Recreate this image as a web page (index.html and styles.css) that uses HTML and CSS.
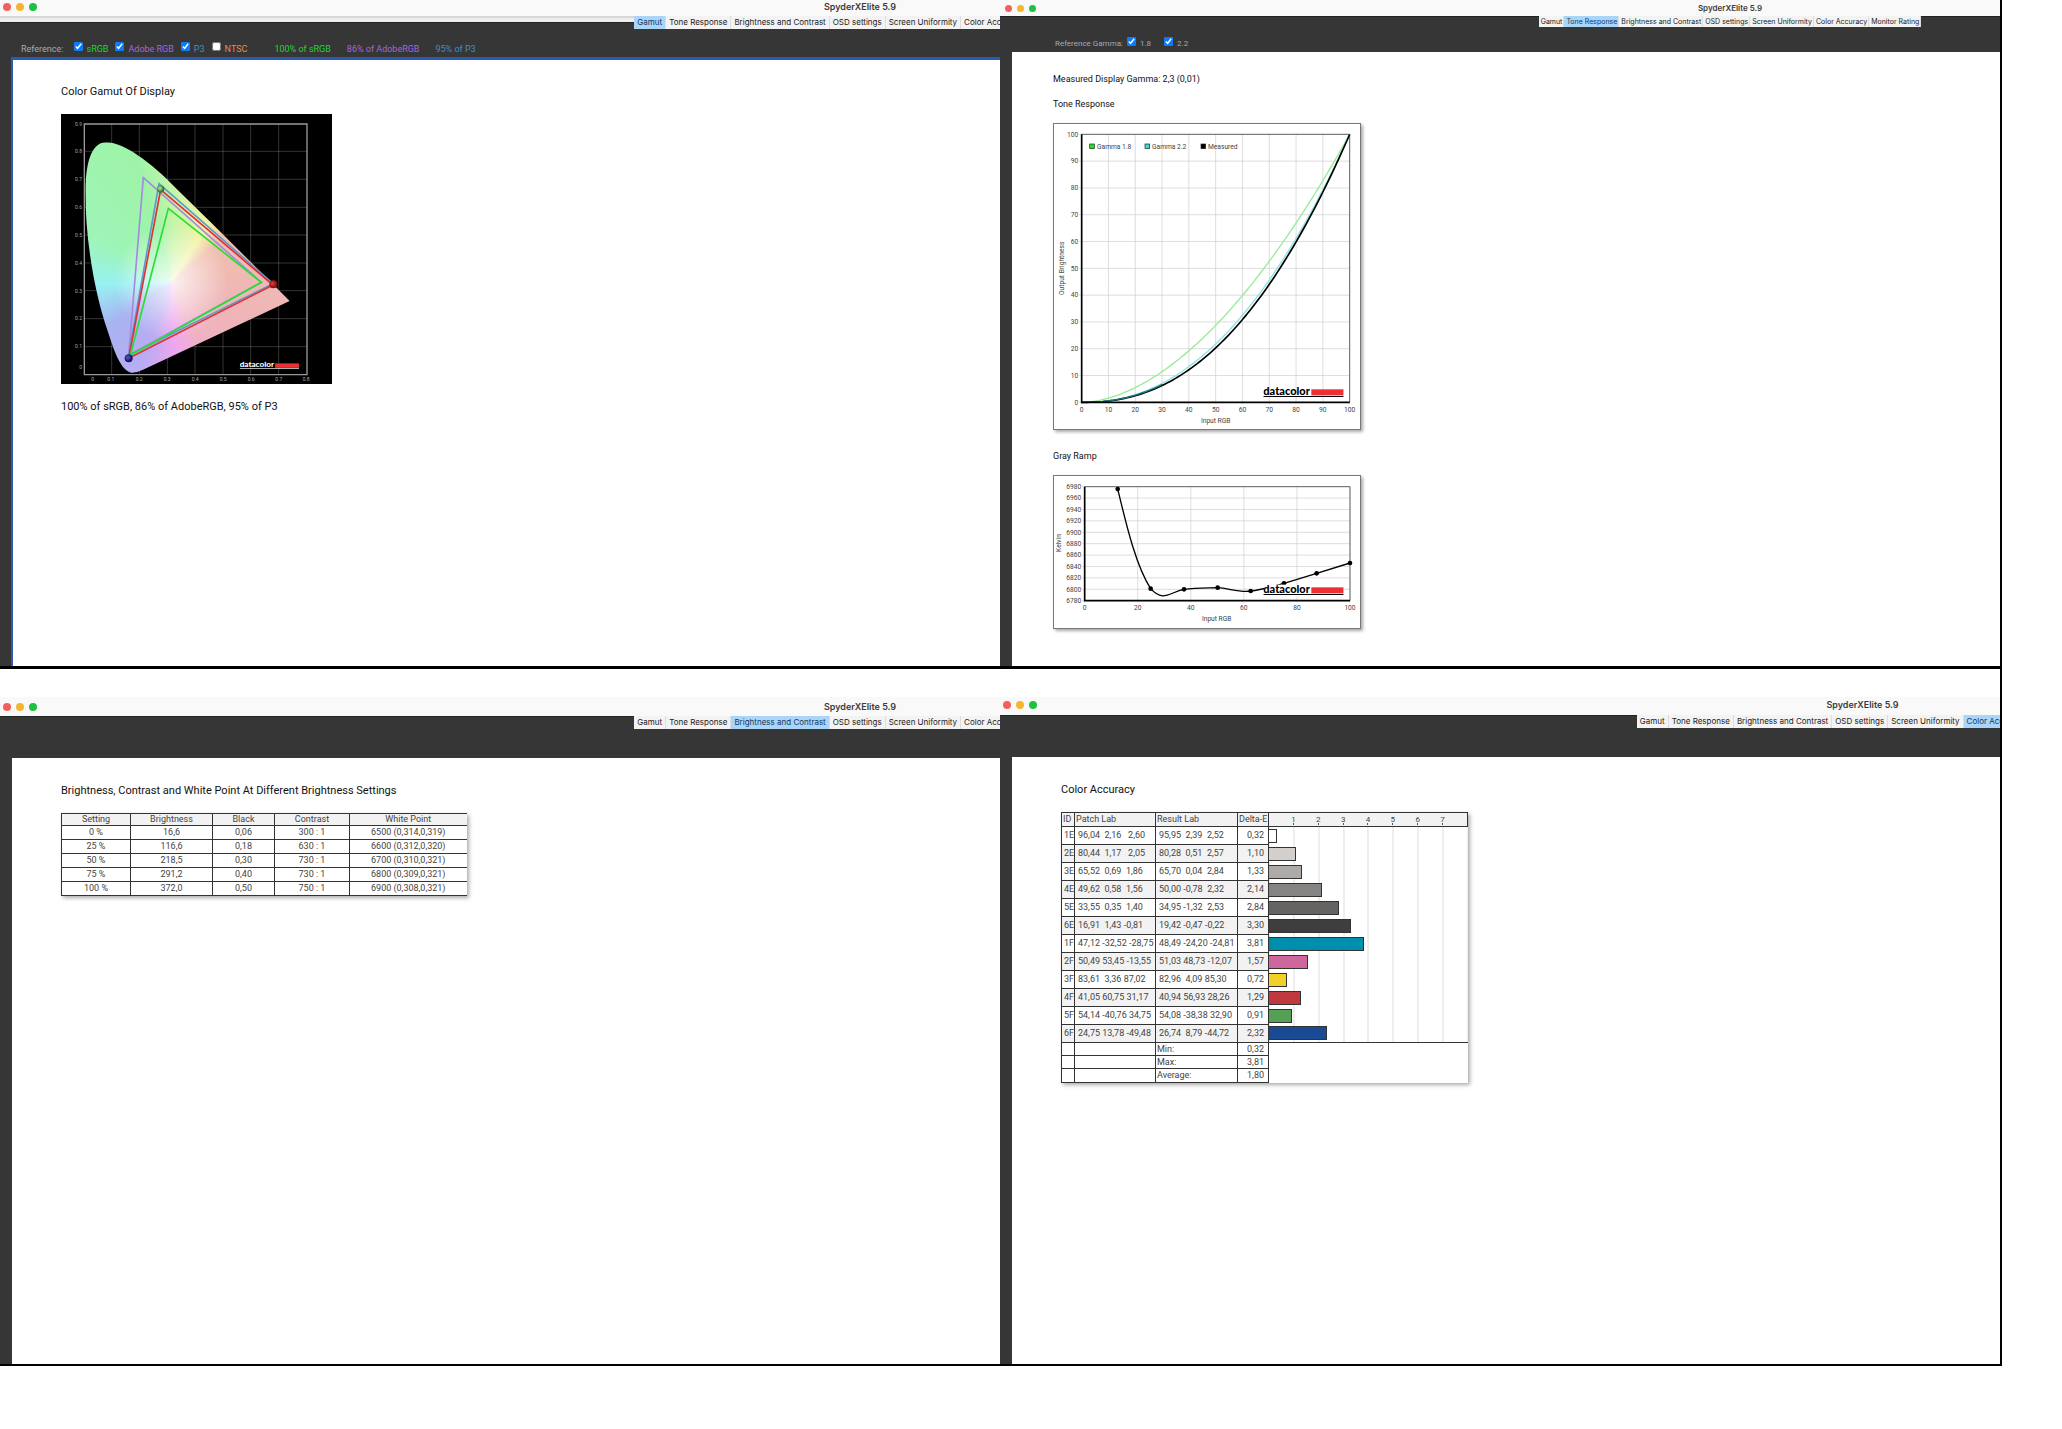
FILE: index.html
```html
<!DOCTYPE html>
<html lang="en">
<head>
<meta charset="utf-8">
<title>SpyderXElite 5.9</title>
<link rel="stylesheet" href="styles.css">
</head>
<body>
<svg class="defs" aria-hidden="true">
  <symbol id="datacolor" viewBox="0 0 241 31">
    <text class="logo-text" x="0" y="23">datacolor</text>
    <rect x="144" y="7" width="97" height="18" fill="#ee3034"/>
    <rect x="0" y="27" width="241" height="3" fill="currentColor"/>
  </symbol>
</svg>
<main class="board">
  <div class="row row-first">
    <section class="window window-gamut">
      <div class="chrome">
        <header class="titlebar"><span class="lights"><i class="red"></i><i class="amber"></i><i class="green"></i></span><span class="title">SpyderXElite 5.9</span></header>
        <nav class="tabs tabs-strip">
          <div class="tablist"><button class="active">Gamut</button><button>Tone Response</button><button>Brightness and Contrast</button><button>OSD settings</button><button>Screen Uniformity</button><button>Color Accuracy</button><button>Monitor Rating</button></div>
        </nav>
      </div>
      <div class="toolbar">
        <span class="lead">Reference:</span>
        <label class="c-srgb"><input type="checkbox" checked>sRGB</label>
        <label class="c-adobe"><input type="checkbox" checked>Adobe RGB</label>
        <label class="c-p3"><input type="checkbox" checked>P3</label>
        <label class="c-ntsc"><input type="checkbox">NTSC</label>
        <span class="results"><span class="c-srgb">100% of sRGB</span><span class="c-adobe">86% of AdobeRGB</span><span class="c-p3">95% of P3</span></span>
      </div>
      <div class="content">
        <h2>Color Gamut Of Display</h2>
        <svg class="gamut" viewBox="64 101 813 810">
          <defs>
            <clipPath id="locus"><path d="M275 877C240 868 222 805 205 755C165 640 137 480 137 330C139 260 150 186 200 186C255 186 340 255 385 300C430 345 500 412 545 457L750 662L310 868Q290 878 275 877Z"/></clipPath>
            <radialGradient id="ballG" cx="0.4" cy="0.4"><stop offset="0" stop-color="#c5e8b0"/><stop offset="1" stop-color="#2d7a28"/></radialGradient>
            <radialGradient id="ballR" cx="0.4" cy="0.4"><stop offset="0" stop-color="#e04040"/><stop offset="1" stop-color="#8a0d10"/></radialGradient>
            <radialGradient id="ballB" cx="0.4" cy="0.4"><stop offset="0" stop-color="#5a55d8"/><stop offset="1" stop-color="#15125e"/></radialGradient>
          </defs>
          <rect x="64" y="101" width="813" height="810"/>
          <path class="gamut-grid" d="M216 131V883M299 131V883M383 131V883M466 131V883M550 131V883M633 131V883M717 131V883M134 213H802M134 297H802M134 381H802M134 464H802M134 548H802M134 631H802M134 715H802M134 799H802"/>
          <foreignObject x="64" y="101" width="813" height="810" clip-path="url(#locus)"><div class="spectrum"></div></foreignObject>
          <path class="gamut-frame" d="M134 131H802V883H134Z"/>
          <g fill="none" stroke-width="5">
            <path stroke="#a58be0" d="M311 292L665 606L267 825Z"/>
            <path stroke="#5d9bc9" d="M358 310L700 610L267 825Z"/>
            <path stroke="#e03038" d="M363 328L700 614L267 834Z"/>
            <path stroke="#25df35" d="M386 384L665 606L272 825Z"/>
          </g>
          <circle cx="363" cy="326" r="11" fill="url(#ballG)"/>
          <circle cx="701" cy="612" r="12" fill="url(#ballR)"/>
          <circle cx="267" cy="834" r="12" fill="url(#ballB)"/>
          <g class="gamut-labels">
            <text x="127" y="136">0.9</text><text x="127" y="219">0.8</text><text x="127" y="303">0.7</text><text x="127" y="387">0.6</text><text x="127" y="470">0.5</text><text x="127" y="553">0.4</text><text x="127" y="637">0.3</text><text x="127" y="720">0.2</text><text x="127" y="804">0.1</text><text x="127" y="866">0</text>
            <text x="163" y="901">0</text><text x="224" y="901">0.1</text><text x="309" y="901">0.2</text><text x="393" y="901">0.3</text><text x="477" y="901">0.4</text><text x="561" y="901">0.5</text><text x="645" y="901">0.6</text><text x="728" y="901">0.7</text><text x="810" y="901">0.8</text>
          </g>
          <use href="#datacolor" x="600" y="844" width="178" height="23" color="#fff"/>
        </svg>
        <p>100% of sRGB, 86% of AdobeRGB, 95% of P3</p>
      </div>
    </section>

    <section class="window window-tone">
      <div class="chrome">
        <header class="titlebar"><span class="lights"><i class="red"></i><i class="amber"></i><i class="green"></i></span><span class="title">SpyderXElite 5.9</span></header>
        <nav class="tabs">
          <div class="tablist"><button>Gamut</button><button class="active">Tone Response</button><button>Brightness and Contrast</button><button>OSD settings</button><button>Screen Uniformity</button><button>Color Accuracy</button><button>Monitor Rating</button></div>
        </nav>
      </div>
      <div class="toolbar">
        <span class="lead">Reference Gamma:</span>
        <label><input type="checkbox" checked>1.8</label>
        <label><input type="checkbox" checked>2.2</label>
      </div>
      <div class="content">
        <p>Measured Display Gamma: 2,3 (0,01)</p>
        <h2>Tone Response</h2>
        <svg class="chart" id="tone" viewBox="41 40 924 921">
          <g class="grid"></g>
          <path class="frame" d="M127 74H931V878"/>
          <g class="curves" fill="none">
            <path class="curve" data-gamma="1.8" stroke="#98ec98" stroke-width="4"/>
            <path class="curve" data-gamma="2.2" stroke="#8fe3e3" stroke-width="4"/>
            <path class="curve" data-gamma="2.3" stroke="#000" stroke-width="5"/>
            <path class="curve" data-gamma="2.25" data-to="30" stroke="#1f7272" stroke-width="4"/>
          </g>
          <path class="axis" d="M127 74V878H931"/>
          <g class="labels"></g>
          <g class="legend">
            <rect x="151" y="103" width="14" height="14" fill="#19e619"/><text x="173" y="118">Gamma 1.8</text>
            <rect x="317" y="103" width="14" height="14" fill="#35dede"/><text x="338" y="118">Gamma 2.2</text>
            <rect x="485" y="103" width="14" height="14" fill="#000"/><text x="506" y="118">Measured</text>
          </g>
          <text class="mid" x="529" y="939">Input RGB</text>
          <text class="mid" transform="translate(74 476) rotate(-90)">Output Brightness</text>
          <use href="#datacolor" x="672" y="832" width="241" height="31"/>
        </svg>
        <h2>Gray Ramp</h2>
        <svg class="chart" id="ramp" viewBox="41 107 924 462">
          <g class="grid"></g>
          <path class="frame" d="M136 142H932V484"/>
          <path class="axis" d="M136 142V484H932"/>
          <g class="labels"></g>
          <path class="ramp-line" d="M235 149C262 260 290 380 334 448C372 490 390 459 434 450C470 445 500 446 535 445C570 447 600 460 634 455C670 452 700 440 734 432L832 402L932 371"/>
          <g><circle cx="235" cy="149" r="7"/><circle cx="334" cy="448" r="7"/><circle cx="434" cy="450" r="7"/><circle cx="535" cy="445" r="7"/><circle cx="634" cy="455" r="7"/><circle cx="734" cy="432" r="7"/><circle cx="832" cy="402" r="7"/><circle cx="932" cy="371" r="7"/></g>
          <rect x="674" y="436" width="239" height="34" fill="#fff"/>
          <text class="mid" x="532" y="545">Input RGB</text>
          <text class="mid" transform="translate(65 311) rotate(-90)">Kelvin</text>
          <use href="#datacolor" x="672" y="437" width="241" height="31"/>
        </svg>
      </div>
    </section>
  </div>

  <div class="row row-second">
    <section class="window window-brightness">
      <div class="chrome">
        <header class="titlebar"><span class="lights"><i class="red"></i><i class="amber"></i><i class="green"></i></span><span class="title">SpyderXElite 5.9</span></header>
        <nav class="tabs">
          <div class="tablist"><button>Gamut</button><button>Tone Response</button><button class="active">Brightness and Contrast</button><button>OSD settings</button><button>Screen Uniformity</button><button>Color Accuracy</button><button>Monitor Rating</button></div>
        </nav>
      </div>
      <div class="toolbar"></div>
      <div class="content">
        <h2>Brightness, Contrast and White Point At Different Brightness Settings</h2>
        <table class="settings">
          <colgroup><col class="w-setting"><col class="w-bright"><col class="w-black"><col class="w-contrast"><col class="w-white"></colgroup>
          <thead><tr><th>Setting</th><th>Brightness</th><th>Black</th><th>Contrast</th><th>White Point</th></tr></thead>
          <tbody>
            <tr><td>0 %</td><td>16,6</td><td>0,06</td><td>300 : 1</td><td>6500 (0,314,0,319)</td></tr>
            <tr><td>25 %</td><td>116,6</td><td>0,18</td><td>630 : 1</td><td>6600 (0,312,0,320)</td></tr>
            <tr><td>50 %</td><td>218,5</td><td>0,30</td><td>730 : 1</td><td>6700 (0,310,0,321)</td></tr>
            <tr><td>75 %</td><td>291,2</td><td>0,40</td><td>730 : 1</td><td>6800 (0,309,0,321)</td></tr>
            <tr><td>100 %</td><td>372,0</td><td>0,50</td><td>750 : 1</td><td>6900 (0,308,0,321)</td></tr>
          </tbody>
        </table>
      </div>
    </section>

    <section class="window window-accuracy">
      <div class="chrome">
        <header class="titlebar"><span class="lights"><i class="red"></i><i class="amber"></i><i class="green"></i></span><span class="title">SpyderXElite 5.9</span></header>
        <nav class="tabs">
          <div class="tablist"><button>Gamut</button><button>Tone Response</button><button>Brightness and Contrast</button><button>OSD settings</button><button>Screen Uniformity</button><button class="active">Color Accuracy</button><button>Monitor Rating</button></div>
        </nav>
      </div>
      <div class="toolbar"></div>
      <div class="content">
        <h2>Color Accuracy</h2>
        <table class="accuracy">
          <colgroup><col class="w-id"><col class="w-patch"><col class="w-result"><col class="w-delta"><col class="w-bars"></colgroup>
          <thead><tr><th>ID</th><th>Patch Lab</th><th>Result Lab</th><th>Delta-E</th><th class="scale"><div><span>1</span><span>2</span><span>3</span><span>4</span><span>5</span><span>6</span><span>7</span></div></th></tr></thead>
          <tbody>
            <tr><td>1E</td><td>96,04  2,16   2,60</td><td>95,95  2,39  2,52</td><td>0,32</td><td class="plot"><div class="bar" style="width:4%;background:#fff"></div></td></tr>
            <tr><td>2E</td><td>80,44  1,17   2,05</td><td>80,28  0,51  2,57</td><td>1,10</td><td class="plot"><div class="bar" style="width:13.75%;background:#d2cfcd"></div></td></tr>
            <tr><td>3E</td><td>65,52  0,69  1,86</td><td>65,70  0,04  2,84</td><td>1,33</td><td class="plot"><div class="bar" style="width:16.63%;background:#adaaa8"></div></td></tr>
            <tr><td>4E</td><td>49,62  0,58  1,56</td><td>50,00 -0,78  2,32</td><td>2,14</td><td class="plot"><div class="bar" style="width:26.75%;background:#858483"></div></td></tr>
            <tr><td>5E</td><td>33,55  0,35  1,40</td><td>34,95 -1,32  2,53</td><td>2,84</td><td class="plot"><div class="bar" style="width:35.5%;background:#656463"></div></td></tr>
            <tr><td>6E</td><td>16,91  1,43 -0,81</td><td>19,42 -0,47 -0,22</td><td>3,30</td><td class="plot"><div class="bar" style="width:41.25%;background:#3e3e3e"></div></td></tr>
            <tr><td>1F</td><td>47,12 -32,52 -28,75</td><td>48,49 -24,20 -24,81</td><td>3,81</td><td class="plot"><div class="bar" style="width:47.63%;background:#008ead"></div></td></tr>
            <tr><td>2F</td><td>50,49 53,45 -13,55</td><td>51,03 48,73 -12,07</td><td>1,57</td><td class="plot"><div class="bar" style="width:19.63%;background:#cd679c"></div></td></tr>
            <tr><td>3F</td><td>83,61  3,36 87,02</td><td>82,96  4,09 85,30</td><td>0,72</td><td class="plot"><div class="bar" style="width:9%;background:#f3d028"></div></td></tr>
            <tr><td>4F</td><td>41,05 60,75 31,17</td><td>40,94 56,93 28,26</td><td>1,29</td><td class="plot"><div class="bar" style="width:16.13%;background:#c0393f"></div></td></tr>
            <tr><td>5F</td><td>54,14 -40,76 34,75</td><td>54,08 -38,38 32,90</td><td>0,91</td><td class="plot"><div class="bar" style="width:11.38%;background:#55a055"></div></td></tr>
            <tr><td>6F</td><td>24,75 13,78 -49,48</td><td>26,74  8,79 -44,72</td><td>2,32</td><td class="plot"><div class="bar" style="width:29%;background:#1b4a94"></div></td></tr>
          </tbody>
          <tfoot>
            <tr><td></td><td></td><td>Min:</td><td>0,32</td><td></td></tr>
            <tr><td></td><td></td><td>Max:</td><td>3,81</td><td></td></tr>
            <tr><td></td><td></td><td>Average:</td><td>1,80</td><td></td></tr>
          </tfoot>
        </table>
      </div>
    </section>
  </div>
</main>
<script src="charts.js"></script>
</body>
</html>
```

FILE: styles.css
```css
* { box-sizing: border-box; }

body {
  margin: 0;
  background: #fff;
  color: #111;
  font-family: Roboto, "Liberation Sans", sans-serif;
  font-size: 11px;
  line-height: 14px;
}

.defs { position: absolute; width: 0; height: 0; }

.board { margin-right: 60px; border-right: 2px solid #000; }
.row { display: grid; grid-template-columns: 1fr 1fr; border-bottom: 2px solid #000; }
.row-first { border-bottom-width: 3px; margin-bottom: 28px; }

/* Windows are cropped at the right: the chrome is wider than the visible part */
.window {
  display: flex;
  flex-direction: column;
  min-width: 0;
  min-height: 667px;
  overflow: hidden;
  background: #363636;
}
.row-first .window { min-height: 666px; }
.chrome { width: 172%; }
.window-tone .chrome { width: 146%; }
.window-accuracy .chrome { width: calc(172% + 5px); }

.titlebar {
  position: relative;
  display: flex;
  justify-content: center;
  align-items: center;
  height: 19px;
  background: #f9f9f9;
  color: #3c3c3c;
  font: 600 9px/12px Inter, sans-serif;
}
.row-first .titlebar { height: 16px; padding-bottom: 2px; }
.row-first .window-tone .titlebar { padding-bottom: 0; font-size: 8px; }
.window-accuracy .titlebar { height: 18px; padding-bottom: 2px; }

.lights { position: absolute; left: 3px; display: flex; gap: 5px; }
.lights i { width: 8px; height: 8px; border-radius: 50%; }
.window-tone .lights { left: 5px; }
.window-tone .lights i { width: 7px; height: 7px; }
.red { background: #f2605a; }
.amber { background: #f5b62e; }
.green { background: #1fc140; }

.tabs { display: flex; justify-content: center; border-top: 1px solid #242424; height: 13px; padding-left: 3px; }
.tabs-strip { border: 0; background: linear-gradient(#d8d8d8 2px, #eee 2px 6px, #242424 6px 7px, #363636 7px); }
.tablist { display: flex; margin-top: -1px; height: 13px; background: #f3f3f3; }
.tabs-strip .tablist { margin-top: 0; }
.tablist button {
  padding: 0 3px;
  border: 0;
  border-right: 1px solid #ddd;
  background: none;
  color: #222;
  font: 8px/13px Inter, sans-serif;
}
.tablist button.active { background: #a9d5fa; color: #14395c; }
.window-tone .tabs, .window-tone .tablist { height: 11px; }
.window-tone .tabs { padding-left: 0; }
.window-tone .tablist button { padding: 0 1px 0 2px; font: 7px/11px Inter, sans-serif; }

.toolbar {
  display: flex;
  align-items: center;
  height: 29px;
  padding: 11px 0 0 21px;
  color: #aaa;
  font-size: 9px;
  line-height: 12px;
}
.window-gamut .toolbar { height: 28px; }
.window-tone .toolbar { height: 25px; padding: 9px 0 0 55px; font-size: 8px; }
.toolbar label { display: flex; gap: 4px; margin-right: 7px; }
.toolbar .lead { margin-right: 10px; }
.window-tone .toolbar .lead { margin-right: 4px; }
.window-tone .toolbar label { margin-right: 13px; }
.toolbar input { width: 9px; height: 9px; margin: -1px 0 0; accent-color: #0a7aff; }
.results { display: flex; gap: 16px; margin-left: 20px; }
.c-srgb { color: #1ed62c; }
.c-adobe { color: #a765dc; }
.c-p3 { color: #3f8fc4; }
.c-ntsc { color: #e58a55; }

.content { flex: 1; margin-left: 12px; padding: 26px 49px; background: #fff; }
.window-gamut .content { margin-left: 11px; border: solid #2a5bb0; border-width: 3px 0 0 2px; padding: 25px 48px; }
.window-tone .content { padding: 20px 41px; font-size: 9px; }
h2, p { margin: 0 0 15px; font-size: inherit; font-weight: 400; }
.window-tone p { margin-bottom: 11px; }
.window-tone h2 { margin-bottom: 12px; }

svg { display: block; }
.gamut { width: 271px; height: 270px; margin-bottom: 16px; }
.spectrum {
  width: 813px;
  height: 810px;
  background:
    radial-gradient(circle at 331px 504px, #fffc 0, #fff0 170px),
    conic-gradient(from 0deg at 331px 504px, #c4f5a8, #f3f3a8 33deg, #f0bfae 50deg, #efb4b8 120deg, #efb2c4 155deg, #f0a6ee 177deg, #b8acf2 200deg, #a8b4f2 235deg, #98f0f2 268deg, #9ef5b8 300deg, #9ff3a8 345deg, #c4f5a8);
}
.gamut-grid { fill: none; stroke: #fff; stroke-opacity: .2; stroke-width: 3; }
.gamut-frame { fill: none; stroke: #999; stroke-width: 4; }
.gamut-labels { fill: #aaa; font-size: 15px; text-anchor: end; }
.logo-text { fill: currentColor; font: 900 33px Lato, sans-serif; }

.chart {
  width: 308px;
  height: 307px;
  margin-bottom: 19px;
  background: #fff;
  outline: 1px solid #777;
  outline-offset: -1px;
  box-shadow: 2px 2px 3px #0005;
  font-size: 20px;
  fill: #444;
}
#ramp { height: 154px; margin-bottom: 0; }
#ramp circle { fill: #000; }
.grid { stroke: #ccc; stroke-width: 2; }
.frame { fill: none; stroke: #666; stroke-width: 3; }
.axis { fill: none; stroke: #000; stroke-width: 5; }
.ramp-line { fill: none; stroke: #000; stroke-width: 4; }
.legend rect { stroke: #222; stroke-width: 2; }
.mid { text-anchor: middle; }
.chart use { color: #000; }

table { border-collapse: collapse; table-layout: fixed; box-shadow: 2px 2px 4px #0005; color: #444; font-size: 9px; line-height: 11px; }
th, td { padding: 0; border: 1px solid #333; font-weight: 400; }
th { background: #f2f2f2; }
.settings { width: 405px; height: 83px; text-align: center; }
.settings :is(th, td):last-child { border-right: 0; }
.w-setting { width: 69px; }
.w-bright { width: 82px; }
.w-black { width: 62px; }
.w-contrast { width: 75px; }
.w-white { width: 117px; }

.accuracy { width: 406px; text-align: left; white-space: pre; }
.w-id { width: 13px; }
.w-patch { width: 81px; }
.w-result { width: 82px; }
.w-delta { width: 31px; }
.w-bars { width: 199px; }
.accuracy thead tr { height: 14px; }
.accuracy tbody tr { height: 18px; }
.accuracy tfoot tr { height: 13px; }
.accuracy tfoot tr:last-child { height: 14px; }
.accuracy :is(th, td) { padding-left: 1px; }
.accuracy tbody tr:nth-child(even) td:not(.plot) { background: #f2f2f2; }
.accuracy td:first-child { padding-left: 2px; }
.accuracy tbody td:nth-child(2), .accuracy tbody td:nth-child(3) { padding-left: 3px; }
.accuracy td:nth-child(4) { padding: 0 4px 0 0; text-align: right; }
.accuracy td.plot {
  padding: 0;
  border-width: 0 0 0 1px;
  background: repeating-linear-gradient(to right, #fff 0 calc(12.5% - 1px), #ddd calc(12.5% - 1px) 12.5%);
}
.accuracy tfoot td:last-child { border-width: 0; }
.accuracy tfoot tr:first-child td { border-top-width: 1px; border-top-style: solid; }
.bar { height: 14px; border: 1px solid #333; border-left: 0; }
.accuracy .scale { padding: 0; }
.scale div { display: grid; grid-template-columns: repeat(7, 1fr); padding: 0 12px; text-align: center; font-size: 8px; }
.scale span { background: linear-gradient(#555, #555) center bottom / 1px 2px no-repeat; }
```

FILE: charts.js
```js
// Draws the grids, tick labels and gamma curves of the tone charts.
const NS = 'http://www.w3.org/2000/svg';

function add(parent, name, attrs, text) {
  const el = document.createElementNS(NS, name);
  for (const key in attrs) el.setAttribute(key, attrs[key]);
  if (text !== undefined) el.textContent = text;
  parent.appendChild(el);
}

function axes(id, box, xs, ys, labelY) {
  const grid = document.querySelector(id + ' .grid');
  const labels = document.querySelector(id + ' .labels');
  xs.forEach((v, i) => {
    const x = box.left + (box.right - box.left) * i / (xs.length - 1);
    add(grid, 'path', { d: `M${x} ${box.top}V${box.bottom + 6}` });
    add(labels, 'text', { x, y: labelY, class: 'mid' }, v);
  });
  ys.forEach((v, i) => {
    const y = box.bottom - (box.bottom - box.top) * i / (ys.length - 1);
    add(grid, 'path', { d: `M${box.left - 8} ${y}H${box.right}` });
    add(labels, 'text', { x: box.left - 10, y: y + 7, 'text-anchor': 'end' }, v);
  });
}

const range = (from, to, step) => Array.from({ length: (to - from) / step + 1 }, (_, i) => from + i * step);

const tone = { left: 127, right: 931, top: 74, bottom: 878 };
axes('#tone', tone, range(0, 100, 10), range(0, 100, 10), 907);
axes('#ramp', { left: 136, right: 932, top: 142, bottom: 484 }, range(0, 100, 20), range(6780, 6980, 20), 512);

document.querySelectorAll('.curve').forEach(path => {
  const gamma = Number(path.dataset.gamma);
  const end = Number(path.dataset.to || 100);
  const points = range(0, end, 1).map(v =>
    `${(tone.left + v * 8.04).toFixed(1)} ${(tone.bottom - 804 * Math.pow(v / 100, gamma)).toFixed(1)}`);
  path.setAttribute('d', 'M' + points.join('L'));
});
```
